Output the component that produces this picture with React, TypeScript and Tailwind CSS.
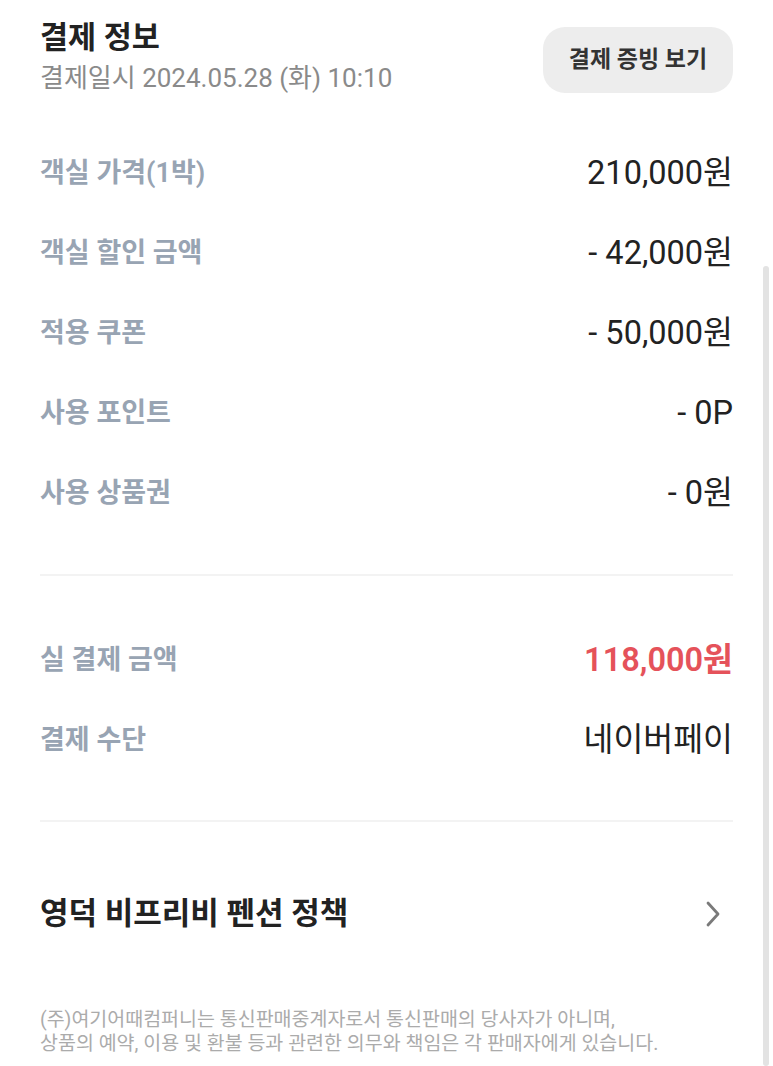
const ROWS = [
  { label: "객실 가격(1박)", value: "210,000원" },
  { label: "객실 할인 금액", value: "- 42,000원" },
  { label: "적용 쿠폰", value: "- 50,000원" },
  { label: "사용 포인트", value: "- 0P" },
  { label: "사용 상품권", value: "- 0원" },
];

function Row({
  label,
  value,
  valueClass = "text-[#222222]",
}: {
  label: string;
  value: string;
  valueClass?: string;
}) {
  return (
    <div className="h-20 flex items-center justify-between">
      <span className="text-[27px] font-semibold text-[#98a4b3]">{label}</span>
      <span className={`text-[32.5px] ${valueClass}`}>{value}</span>
    </div>
  );
}

export default function App() {
  return (
    <div className="relative h-[1066px] overflow-hidden bg-white px-10 pt-[20px] font-['Roboto','Noto_Sans_CJK_KR',sans-serif]">
      {/* Header */}
      <div className="flex items-start justify-between">
        <div className="flex flex-col">
          <h1 className="text-[30.5px] leading-[36px] font-bold text-[#222222]">
            결제 정보
          </h1>
          <p className="mt-[6px] text-[26px] leading-[32px] text-[#8a8a8a]">
            결제일시 2024.05.28 (화) 10:10
          </p>
        </div>
        <button className="mt-[7px] h-[66px] w-[190px] rounded-[22px] bg-[#ededed] text-[23px] font-bold text-[#333333]">
          결제 증빙 보기
        </button>
      </div>

      {/* Price breakdown */}
      <div className="mt-[39px]">
        {ROWS.map((r) => (
          <Row key={r.label} label={r.label} value={r.value} />
        ))}
      </div>

      <div className="mt-[41px] h-[2px] bg-[#f3f3f3]" />

      <div className="mt-[44px]">
        <Row
          label="실 결제 금액"
          value="118,000원"
          valueClass="text-[#e5525a] font-semibold"
        />
        <Row label="결제 수단" value="네이버페이" />
      </div>

      <div className="mt-[40px] h-[2px] bg-[#f3f3f3]" />

      {/* Policy link */}
      <div className="mt-[52px] h-20 flex items-center justify-between">
        <span className="text-[31px] font-bold text-[#222222]">
          영덕 비프리비 펜션 정책
        </span>
        <svg
          width="24"
          height="28"
          viewBox="0 0 24 28"
          fill="none"
          stroke="#7a7a7a"
          strokeWidth="2.8"
          strokeLinecap="round"
          strokeLinejoin="round"
          className="mr-[8px]"
        >
          <path d="M7 3 L17 14 L7 25" />
        </svg>
      </div>

      {/* Footer notice */}
      <p className="mt-[54px] text-[19.5px] leading-[24px] text-[#ababab]">
        (주)여기어때컴퍼니는 통신판매중계자로서 통신판매의 당사자가 아니며,
        <br />
        상품의 예약, 이용 및 환불 등과 관련한 의무와 책임은 각 판매자에게 있습니다.
      </p>

      {/* Scrollbar thumb */}
      <div className="absolute right-[4px] top-[266px] bottom-0 w-[6px] rounded-full bg-[#e3e3e3]" />
    </div>
  );
}
